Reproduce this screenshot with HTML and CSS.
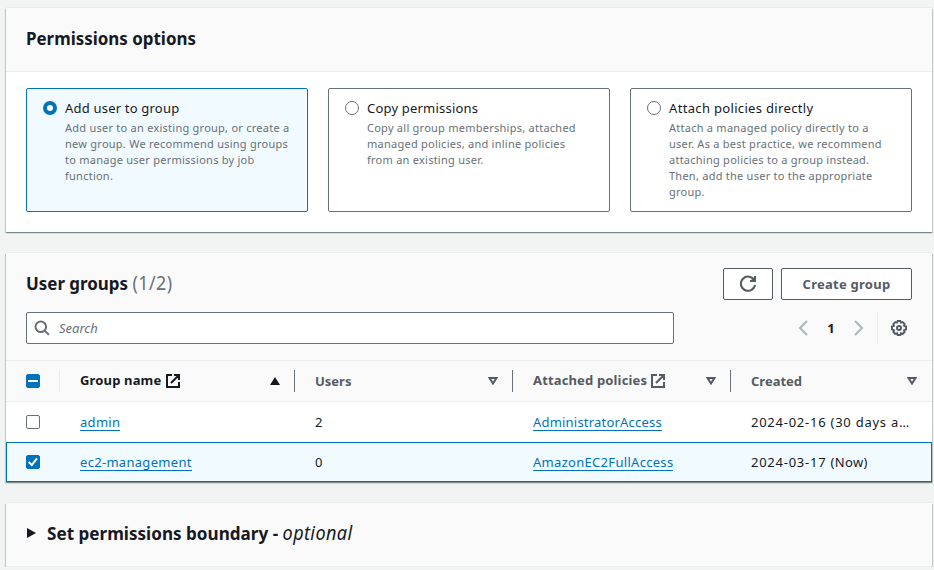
FILE: index.html
```html
<!DOCTYPE html>
<html lang="en">
<head>
<meta charset="utf-8">
<title>Permissions options</title>
<link rel="stylesheet" href="styles.css">
</head>
<body>
<main class="page">
  <section class="card options">
    <header class="options-head"><h2>Permissions options</h2></header>
    <div class="tiles">
      <div class="tile selected">
        <span class="radio on"></span>
        <div class="tile-body"><div class="tile-title">Add user to group</div>
        <p>Add user to an existing group, or create a<br>new group. We recommend using groups<br>to manage user permissions by job<br>function.</p></div>
      </div>
      <div class="tile">
        <span class="radio"></span>
        <div class="tile-body"><div class="tile-title">Copy permissions</div>
        <p>Copy all group memberships, attached<br>managed policies, and inline policies<br>from an existing user.</p></div>
      </div>
      <div class="tile">
        <span class="radio"></span>
        <div class="tile-body"><div class="tile-title wide">Attach policies directly</div>
        <p>Attach a managed policy directly to a<br>user. As a best practice, we recommend<br>attaching policies to a group instead.<br>Then, add the user to the appropriate<br>group.</p></div>
      </div>
    </div>
  </section>

  <section class="card groups">
    <div class="toolbar">
      <div class="title-row">
        <h2 class="groups-title">User groups <span class="count">(1/2)</span></h2>
        <div class="actions">
          <button class="btn refresh" aria-label="Refresh"><svg width="18" height="18" viewBox="0 0 18 18"><path d="M15.300 5.400A7.100 7.100 0 1 0 16 10"/><path d="M16 1v5h-5"/><path class="fill" d="M12 5l4-3v4h-4z"/></svg></button>
          <button class="btn create"><span>Create group</span></button>
        </div>
      </div>
      <div class="search-row">
        <div class="search">
          <svg width="16" height="16" viewBox="0 0 16 16"><circle cx="6.8" cy="6.8" r="5.3"/><path d="M10.6 10.6l4.3 4.2"/></svg>
          <span>Search</span>
        </div>
        <div class="pager">
          <svg class="arrow" width="10" height="16" viewBox="0 0 10 16"><path d="M9 1L2 8l7 7"/></svg>
          <b>1</b>
          <svg class="arrow" width="10" height="16" viewBox="0 0 10 16"><path d="M1 1l7 7-7 7"/></svg>
          <div class="settings"><svg width="16" height="16" viewBox="0 0 16 16"><path d="M6.700 1h2.600l.7 1.600 1.700-.5 1.900 1.900-.6 1.600 2 .9v2.900l-2 .9.6 1.700-1.900 1.900-1.700-.6-.7 1.700H6.700l-.7-1.700-1.700.6L2.400 12l.6-1.700-2-.9V6.500l2-.9L2.400 4l1.900-1.900 1.700.5z"/><circle cx="8" cy="8" r="2"/></svg></div>
        </div>
      </div>
    </div>
    <div class="row head">
      <div class="cell check"><span class="box on"><i class="dash"></i></span></div>
      <div class="cell sorted"><span class="linked">Group name</span><svg class="ext" width="16" height="16" viewBox="0 0 16 16"><path d="M7 2H2v12h12V9M9 2h5v5M14 2L6 10"/></svg><svg class="sort" width="10" height="8" viewBox="0 0 10 8"><path class="fill" d="M5 0l5 8H0z"/></svg></div>
      <div class="cell"><span>Users</span><svg class="sort" width="10" height="8" viewBox="0 0 10 8"><path d="M1.500 1h7L5 6.500z"/></svg></div>
      <div class="cell"><span class="linked">Attached policies</span><svg class="ext near" width="16" height="16" viewBox="0 0 16 16"><path d="M7 2H2v12h12V9M9 2h5v5M14 2L6 10"/></svg><svg class="sort" width="10" height="8" viewBox="0 0 10 8"><path d="M1.500 1h7L5 6.500z"/></svg></div>
      <div class="cell"><span>Created</span><svg class="sort" width="10" height="8" viewBox="0 0 10 8"><path d="M1.500 1h7L5 6.500z"/></svg></div>
    </div>
    <div class="row">
      <div class="cell check"><span class="box"></span></div>
      <div class="cell"><a>admin</a></div>
      <div class="cell">2</div>
      <div class="cell"><a class="tight">AdministratorAccess</a></div>
      <div class="cell"><span class="date">2024-02-16 (30 days a…</span></div>
    </div>
    <div class="row chosen">
      <div class="cell check"><span class="box on"><svg width="14" height="14" viewBox="0 0 14 14"><path d="M2.700 7l3.100 3.100L11 3.300"/></svg></span></div>
      <div class="cell"><a>ec2-management</a></div>
      <div class="cell">0</div>
      <div class="cell"><a>AmazonEC2FullAccess</a></div>
      <div class="cell"><span class="date">2024-03-17</span><span class="note">(Now)</span></div>
    </div>
  </section>

  <section class="card boundary">
    <svg width="9" height="10" viewBox="0 0 9 10"><path d="M0 0l9 5-9 5z"/></svg>
    <h2>Set permissions boundary - <em>optional</em></h2>
  </section>
</main>
</body>
</html>
```
FILE: styles.css
```css
* { box-sizing: border-box; }
body { margin: 0; background: #f2f3f3; color: #16191f; font: 13px/20px "Noto Sans", sans-serif; overflow: hidden; }
h2, p { margin: 0; }
h2 { font-size: 18px; line-height: 22px; font-weight: 700; white-space: nowrap; transform: scaleX(.94); transform-origin: 0 50%; }
svg { display: block; flex: none; fill: none; stroke: currentColor; stroke-width: 2; }
.page { padding: 8px 2px 0 6px; display: flex; flex-direction: column; gap: 21px; }
.card { background: #fff; box-shadow: 0 -1px 0 0 #eaeded, 0 1px 1px 0 rgba(0,28,36,.3), 1px 1px 1px 0 rgba(0,28,36,.15), -1px 1px 1px 0 rgba(0,28,36,.15); }
.options { height: 224px; }
.options-head { height: 64px; padding: 19px 20px; background: #fafafa; border-bottom: 1px solid #eaeded; }
.tiles { display: grid; grid-template-columns: repeat(3, 282px); gap: 20px; padding: 16px 20px 20px; }
.tile { height: 124px; border: 1px solid #687078; border-radius: 2px; padding: 9px 12px 0 16px; display: flex; gap: 8px; }
.tile.selected { background: #f1faff; border-color: #0073bb; }
.radio { width: 14px; height: 14px; flex: none; margin-top: 3px; border: 1px solid #687078; border-radius: 50%; background: #fff; }
.radio.on { border: 4px solid #0073bb; }
.tile-title { white-space: nowrap; letter-spacing: .2px; }
.tile-title.wide { letter-spacing: .33px; }
.tile p { margin-top: 2px; font-size: 11px; line-height: 16px; color: #687078; white-space: nowrap; letter-spacing: .25px; }
.toolbar { height: 108px; background: #fafafa; border-bottom: 1px solid #eaeded; padding: 15px 20px 0; }
.title-row, .search-row, .actions, .pager { display: flex; align-items: center; }
.title-row { justify-content: space-between; height: 32px; }
.groups-title { padding-bottom: 2px; }
.count { color: #687078; font-size: 19px; font-weight: 400; letter-spacing: .5px; }
.actions { gap: 8px; }
.btn { height: 32px; border: 1px solid #545b64; border-radius: 2px; background: #fff; color: #545b64; font: 700 13px/20px "Noto Sans", sans-serif; padding: 0; display: flex; align-items: center; justify-content: center; }
.refresh { width: 50px; }
.create { width: 131px; letter-spacing: .25px; }
.search-row { margin-top: 12px; justify-content: space-between; }
.search { width: 648px; height: 32px; background: #fff; border: 1px solid #687078; border-radius: 2px; display: flex; align-items: center; gap: 9px; padding-left: 7px; color: #687078; font-style: italic; }
.pager { color: #545b64; height: 32px; }
.arrow { color: #aab7b8; }
.pager b { color: #16191f; width: 46px; text-align: center; }
.settings { height: 32px; margin-left: 13px; border-left: 1px solid #eaeded; width: 35px; display: flex; align-items: center; padding-left: 13px; }
.settings svg { stroke-width: 2; }
.row { display: grid; grid-template-columns: 54px 235px 218px 218px 201px; height: 40px; }
.cell { display: flex; align-items: center; padding-left: 20px; white-space: nowrap; min-width: 0; }
.head { height: 41px; background: #fafafa; border-bottom: 1px solid #eaeded; color: #545b64; font-weight: 700; align-items: center; }
.head .cell { height: 22px; border-right: 1px solid #687078; padding-right: 14px; }
.head .check { border-color: #eaeded; }
.head .cell:last-child { border: 0; padding-right: 15px; }
.head .sorted { color: #16191f; }
.linked { letter-spacing: .15px; padding-bottom: 2px; }
.ext { margin-left: 4px; }
.ext.near { margin-left: 3px; }
.sort { margin-left: auto; }
.fill { fill: currentColor; stroke: none; }
.box { width: 14px; height: 14px; border: 1px solid #687078; border-radius: 2px; background: #fff; display: flex; align-items: center; justify-content: center; flex: none; color: #fff; }
.box.on { background: #0073bb; border-color: #0073bb; }
.dash { width: 10px; height: 2px; background: #fff; }
.date { letter-spacing: .75px; }
.note { letter-spacing: .4px; margin-left: 4px; }
.chosen { background: #f1faff; outline: 1px solid #0073bb; outline-offset: -1px; }
a { color: #0073bb; line-height: 16px; border-bottom: 1px solid #0073bb; letter-spacing: .3px; }
a.tight { letter-spacing: .2px; }
.boundary { height: 64px; background: #fafafa; border-bottom: 1px solid #eaeded; display: flex; align-items: center; gap: 11px; padding: 0 0 3px 21px; }
.boundary h2 { transform: scaleX(.95); }
.boundary svg { fill: currentColor; stroke: none; }
em { font-size: 19px; font-weight: 400; letter-spacing: .4px; }
```
